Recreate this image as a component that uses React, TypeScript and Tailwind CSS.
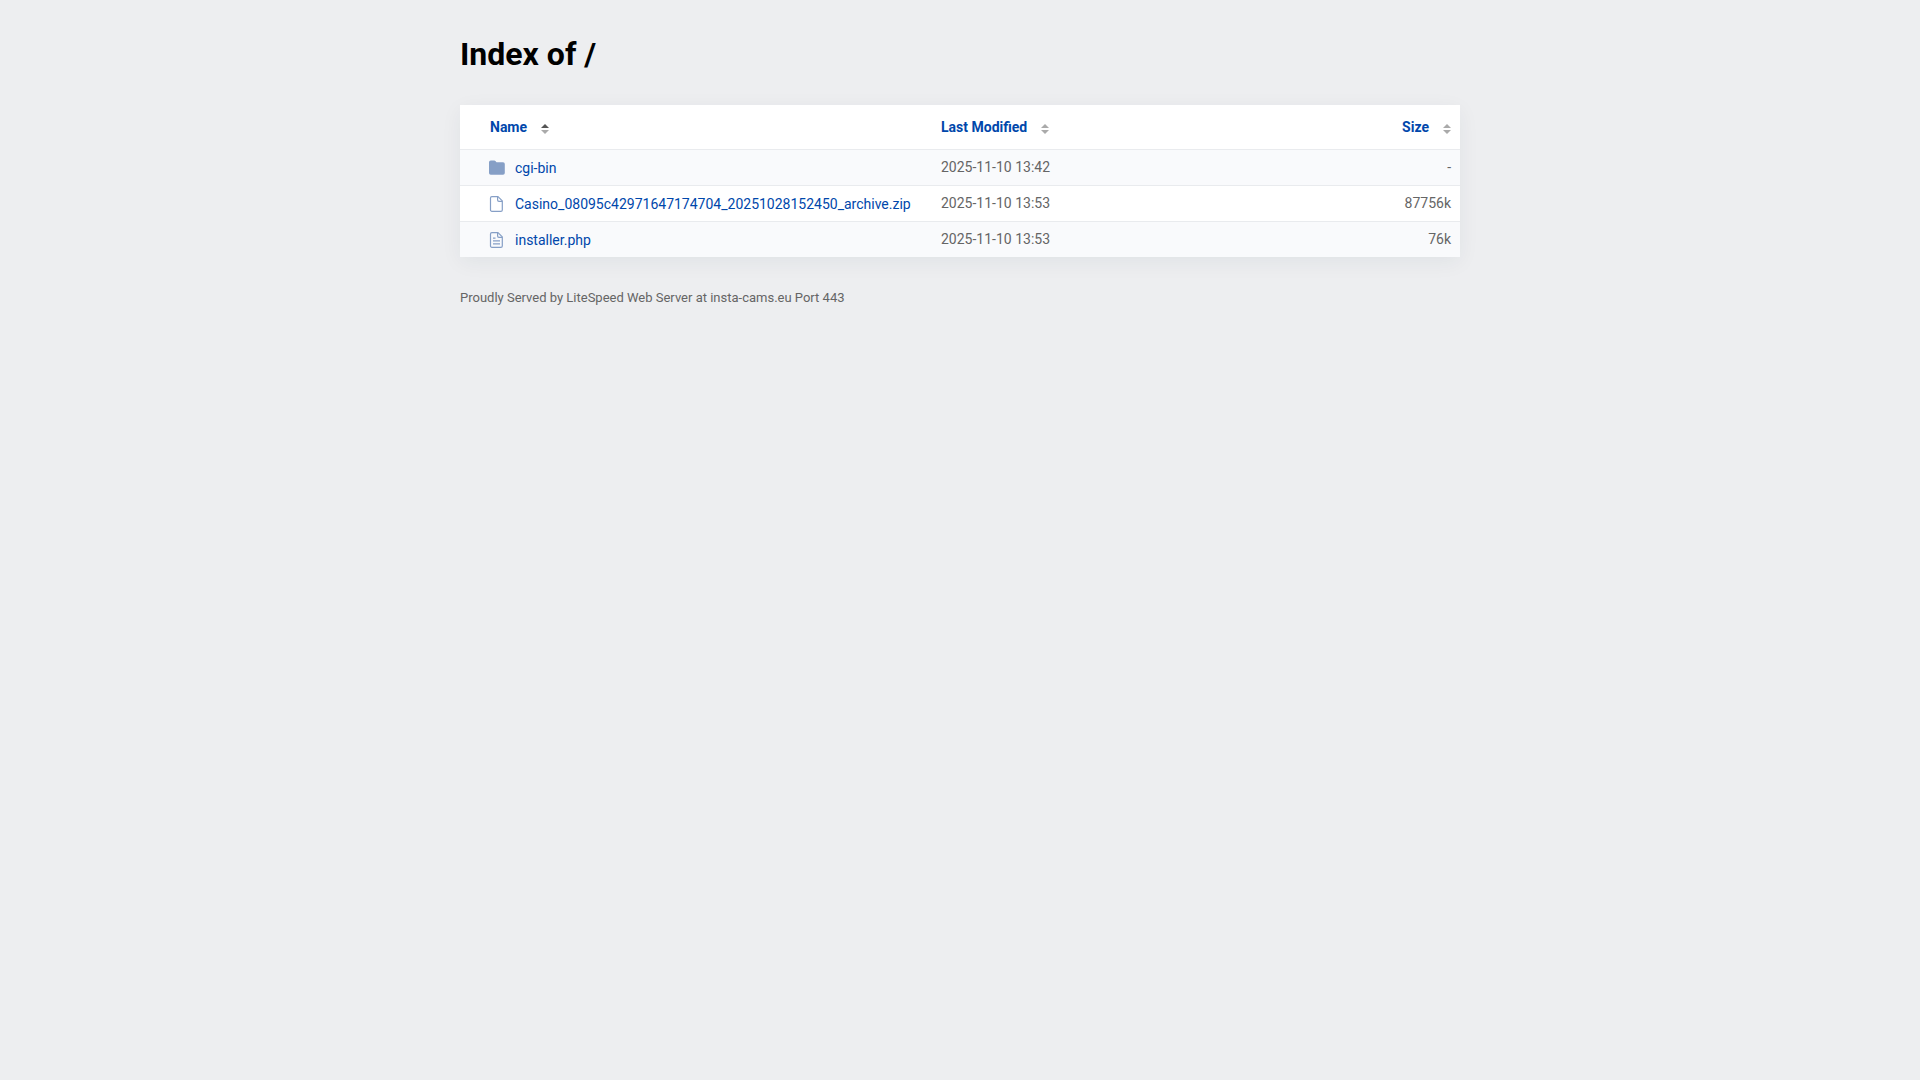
import React from "react";

type Sort = "asc" | "none";

const files = [
  { name: "cgi-bin", modified: "2025-11-10 13:42", size: "-", icon: "folder" },
  {
    name: "Casino_08095c42971647174704_20251028152450_archive.zip",
    modified: "2025-11-10 13:53",
    size: "87756k",
    icon: "file",
  },
  { name: "installer.php", modified: "2025-11-10 13:53", size: "76k", icon: "text" },
];

const FileIcon = ({ type }: { type: string }) => {
  if (type === "folder") {
    return (
      <svg className="h-4 w-4 shrink-0" viewBox="0 0 16 16" fill="#869fc6" aria-hidden="true">
        <path d="M1.800 .5h3.500q.7 0 1.100 .5l1.100 1.300H14a1.800 1.800 0 0 1 1.800 1.800v8.800a1.800 1.800 0 0 1-1.800 1.800H1.800A1.800 1.800 0 0 1 0 12.900V2.300A1.800 1.800 0 0 1 1.800 .5z" />
      </svg>
    );
  }
  return (
    <svg
      className="h-4 w-4 shrink-0"
      viewBox="0 0 16 16"
      fill="none"
      stroke="#869fc6"
      strokeWidth="1.2"
      strokeLinejoin="round"
      aria-hidden="true"
    >
      <path d="M2.700 .6H9L13.300 4.900V13.900a1.400 1.400 0 0 1-1.400 1.400H2.900a1.400 1.400 0 0 1-1.400-1.400V2A1.400 1.400 0 0 1 2.900 .6z" />
      <path d="M8.600 .8v3.200a1.400 1.400 0 0 0 1.400 1.400h3.200" />
      {type === "text" && <path d="M4 6.200h2.500M4 8.900h7M4 11.800h7" />}
    </svg>
  );
};

const SortIcon = ({ sort }: { sort: Sort }) => (
  <svg className="h-[10px] w-2 shrink-0" viewBox="0 0 8 10" aria-hidden="true">
    <path d="M0 4l4-4 4 4z" fill={sort === "asc" ? "#555" : "#aaa"} />
    <path d="M0 6l4 4 4-4z" fill="#aaa" />
  </svg>
);

const HeaderButton = ({ label, sort }: { label: string; sort: Sort }) => (
  <button type="button" className="inline-flex items-end gap-3.5 leading-[14px] font-bold text-[#0047ab]">
    {label}
    <SortIcon sort={sort} />
  </button>
);

const App = () => {
  return (
    <div className="min-h-screen bg-[#edeef0] px-5 pt-8 font-['Roboto',sans-serif] text-sm text-[#656565]">
      <main className="mx-auto max-w-[1000px]">
        <h1 className="mb-[29px] text-[32px] leading-11 font-bold text-black">Index of /</h1>
        <table className="w-full border-collapse bg-white shadow-[0_5px_20px_rgba(0,50,60,0.06)]">
          <thead>
            <tr className="h-11 text-left">
              <th className="w-[472px] pl-[30px]">
                <HeaderButton label="Name" sort="asc" />
              </th>
              <th className="pl-[9px]">
                <HeaderButton label="Last Modified" sort="none" />
              </th>
              <th className="pr-[9px] text-right">
                <HeaderButton label="Size" sort="none" />
              </th>
            </tr>
          </thead>
          <tbody>
            {files.map((file) => (
              <tr key={file.name} className="h-9 border-t border-[#e9ebee] odd:bg-[#f9fafc]">
                <td className="pt-px pl-[29px]">
                  <a href="#" className="flex items-center gap-2.5 text-[#0047ab]">
                    <FileIcon type={file.icon} />
                    {file.name}
                  </a>
                </td>
                <td className="pl-[9px]">{file.modified}</td>
                <td className="pr-[9px] text-right">{file.size}</td>
              </tr>
            ))}
          </tbody>
        </table>
        <footer className="pt-[33px] text-[13px] leading-4">
          Proudly Served by LiteSpeed Web Server at insta-cams.eu Port 443
        </footer>
      </main>
    </div>
  );
};

export default App;
